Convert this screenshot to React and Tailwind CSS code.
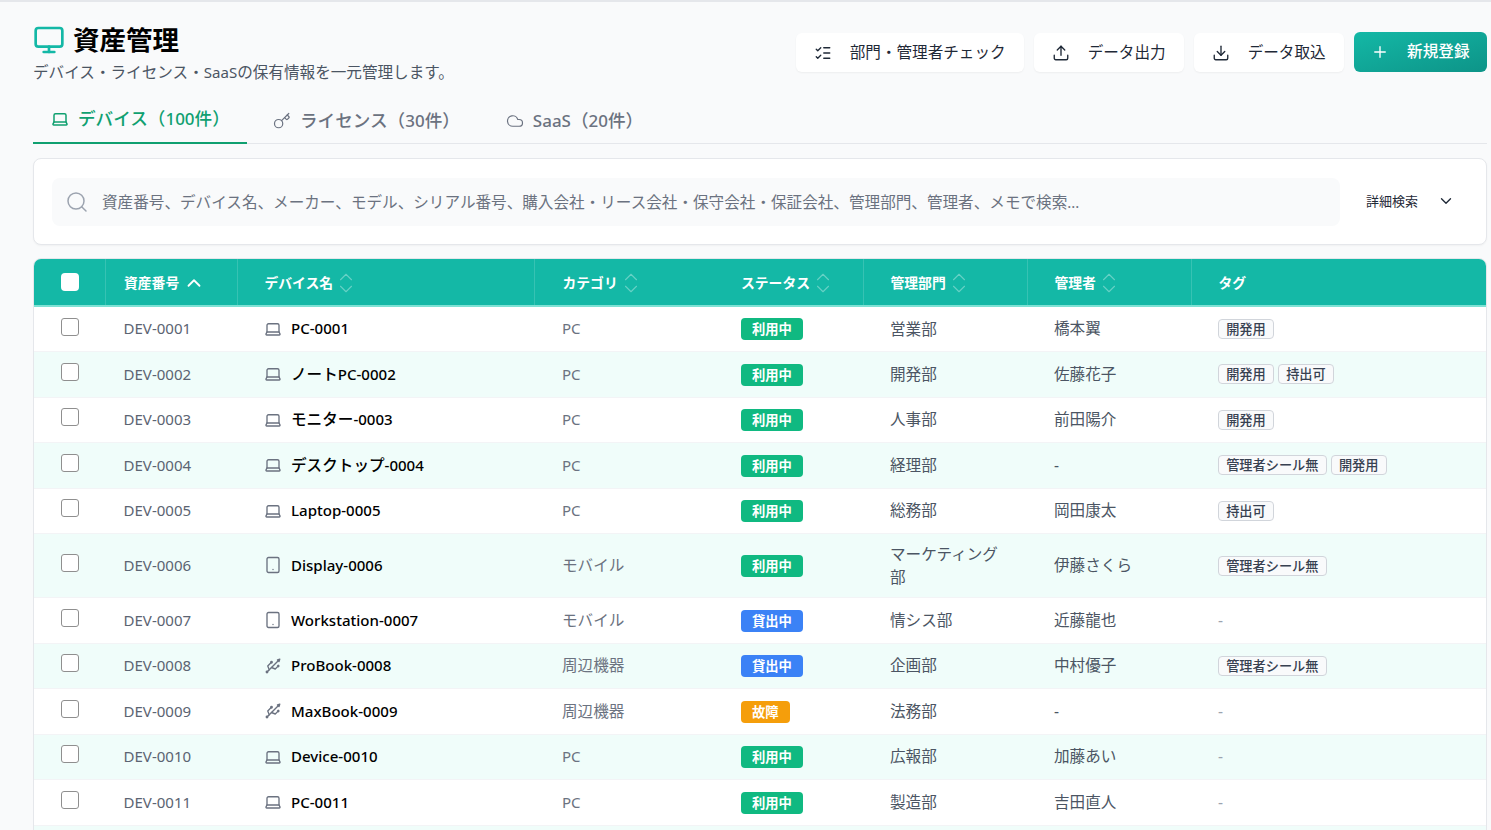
import React from "react";
import {
  Monitor, Laptop, Key, Cloud, Search, ChevronDown, ChevronUp,
  ListChecks, Upload, Download, Plus, Tablet, Usb,
} from "lucide-react";

const rows = [
  { id: "DEV-0001", name: "PC-0001", icon: "laptop", category: "PC", status: "利用中", dept: "営業部", owner: "橋本翼", tags: ["開発用"] },
  { id: "DEV-0002", name: "ノートPC-0002", icon: "laptop", category: "PC", status: "利用中", dept: "開発部", owner: "佐藤花子", tags: ["開発用", "持出可"] },
  { id: "DEV-0003", name: "モニター-0003", icon: "laptop", category: "PC", status: "利用中", dept: "人事部", owner: "前田陽介", tags: ["開発用"] },
  { id: "DEV-0004", name: "デスクトップ-0004", icon: "laptop", category: "PC", status: "利用中", dept: "経理部", owner: "-", tags: ["管理者シール無", "開発用"] },
  { id: "DEV-0005", name: "Laptop-0005", icon: "laptop", category: "PC", status: "利用中", dept: "総務部", owner: "岡田康太", tags: ["持出可"] },
  { id: "DEV-0006", name: "Display-0006", icon: "tablet", category: "モバイル", status: "利用中", dept: "マーケティング部", owner: "伊藤さくら", tags: ["管理者シール無"] },
  { id: "DEV-0007", name: "Workstation-0007", icon: "tablet", category: "モバイル", status: "貸出中", dept: "情シス部", owner: "近藤龍也", tags: [] },
  { id: "DEV-0008", name: "ProBook-0008", icon: "usb", category: "周辺機器", status: "貸出中", dept: "企画部", owner: "中村優子", tags: ["管理者シール無"] },
  { id: "DEV-0009", name: "MaxBook-0009", icon: "usb", category: "周辺機器", status: "故障", dept: "法務部", owner: "-", tags: [] },
  { id: "DEV-0010", name: "Device-0010", icon: "laptop", category: "PC", status: "利用中", dept: "広報部", owner: "加藤あい", tags: [] },
  { id: "DEV-0011", name: "PC-0011", icon: "laptop", category: "PC", status: "利用中", dept: "製造部", owner: "吉田直人", tags: [] },
];

const statusClass = {
  "利用中": "bg-[#10b981]",
  "貸出中": "bg-[#3b82f6]",
  "故障": "bg-[#f59e0b]",
};

const deviceIcons = { laptop: Laptop, tablet: Tablet, usb: Usb };

// Latin runs sit a little smaller than the kana and kanji around them
const Mixed = ({ text }) =>
  text.split(/([A-Za-z0-9.-]+)/).map((part, i) =>
    i % 2 === 1 ? <span key={i} className="text-[0.965em]">{part}</span> : part
  );

const SortIcon = () => (
  <span className="ml-[2px] flex flex-col text-white/35">
    <ChevronUp size={22} strokeWidth={1.2} className="-mb-[10.5px]" />
    <ChevronDown size={22} strokeWidth={1.2} />
  </span>
);

const HeaderCell = ({ children, sort = true, last = false, className = "pl-[27px]" }) => (
  <th className={`h-[47px] pt-[2px] text-left align-middle text-[13.8px] font-bold text-white ${className} ${last ? "" : "border-r border-white/15"}`}>
    <div className="flex items-center">
      {children}
      {sort && <SortIcon />}
    </div>
  </th>
);

const ActionButton = ({ icon: Icon, label }) => (
  <button className="flex h-[39px] items-center gap-[18px] rounded-md bg-white px-[18px] text-[15.6px] text-[#1f2937] shadow-[0_1px_2px_rgba(0,0,0,0.05)]">
    <Icon size={18} strokeWidth={1.8} />
    {label}
  </button>
);

const App = () => {
  return (
    <div
      className="h-[830px] w-[1491px] overflow-hidden border-t-2 border-[#e5e7eb] bg-[#f9fafb] pl-[33px] pr-[4px] text-[#4b5563]"
      style={{ fontFamily: '"Noto Sans", "Noto Sans CJK JP", sans-serif' }}
    >
      {/* Header */}
      <div className="flex items-start justify-between pt-[20px]">
        <div>
          <div className="flex items-center gap-[8px]">
            <Monitor size={32} strokeWidth={2} className="text-[#14b8a6]" />
            <h1 className="text-[26.5px] leading-[36px] font-bold text-black">資産管理</h1>
          </div>
          <p className="mt-[3px] text-[15.6px] leading-[22px] text-[#4b5563]"><Mixed text="デバイス・ライセンス・SaaSの保有情報を一元管理します。" /></p>
        </div>
        <div className="flex items-start gap-[10px] pt-[11px]">
          <ActionButton icon={ListChecks} label="部門・管理者チェック" />
          <ActionButton icon={Upload} label="データ出力" />
          <ActionButton icon={Download} label="データ取込" />
          <button className="-mt-[1px] flex h-[40px] items-center gap-[18px] rounded-md bg-gradient-to-br from-[#14b8a6] to-[#0d9488] px-[17.5px] text-[15.6px] font-medium text-white">
            <Plus size={18} strokeWidth={1.8} />
            新規登録
          </button>
        </div>
      </div>

      {/* Tabs */}
      <div className="mt-[14px] flex h-[47px] items-center border-b border-[#e5e7eb]">
        <div className="flex h-[47px] w-[214px] items-center gap-[9px] border-b-2 border-[#10a070] pb-[1px] pl-[18px] text-[17.6px] font-medium text-[#10a070]">
          <Laptop size={18} strokeWidth={2} />
          <span><Mixed text="デバイス（100件）" /></span>
        </div>
        <div className="flex h-[47px] items-center gap-[9px] pl-[26px] pt-[1px] text-[17.6px] font-medium text-[#6b7280]">
          <Key size={18} strokeWidth={1.6} />
          <span><Mixed text="ライセンス（30件）" /></span>
        </div>
        <div className="flex h-[47px] items-center gap-[9px] pl-[46px] pt-[1px] text-[17.6px] font-medium text-[#6b7280]">
          <Cloud size={18} strokeWidth={1.6} />
          <span><Mixed text="SaaS（20件）" /></span>
        </div>
      </div>

      {/* Search */}
      <div className="mt-[14px] flex h-[87px] items-center rounded-lg border border-[#e5e7eb] bg-white pl-[18px] pr-[31px] shadow-[0_1px_2px_rgba(0,0,0,0.04)]">
        <div className="flex h-[48px] w-[1288px] items-center gap-[13px] rounded-lg bg-[#f9fafb] pl-[13px]">
          <Search size={24} strokeWidth={1.5} className="text-[#9ca3af]" />
          <span className="pt-[2px] text-[15.6px] text-[#6b7280]"><Mixed text="資産番号、デバイス名、メーカー、モデル、シリアル番号、購入会社・リース会社・保守会社・保証会社、管理部門、管理者、メモで検索..." /></span>
        </div>
        <div className="ml-[26px] flex flex-1 items-center justify-between text-[13px] text-[#1f2937]">
          詳細検索
          <ChevronDown size={18} strokeWidth={1.8} className="-mt-[2px]" />
        </div>
      </div>

      {/* Table */}
      <div className="mt-[13px] overflow-hidden rounded-lg border border-[#e5e7eb] bg-white">
        <table className="w-full table-fixed border-collapse">
          <colgroup>
            <col className="w-[71px]" />
            <col className="w-[132px]" />
            <col className="w-[297px]" />
            <col className="w-[179px]" />
            <col className="w-[150px]" />
            <col className="w-[164px]" />
            <col className="w-[164px]" />
            <col />
          </colgroup>
          <thead>
            <tr className="border-b-2 border-[#7ee2d4] bg-[#14b8a6]">
              <th className="h-[47px] border-r border-white/15 pl-[2px] text-center align-middle">
                <span className="mx-auto block size-[18px] rounded-[4px] bg-white" />
              </th>
              <th className="h-[47px] border-r border-white/15 pl-[18.5px] pt-[2px] text-left align-middle text-[13.8px] font-bold text-white">
                <div className="flex items-center">
                  資産番号
                  <ChevronUp size={22} strokeWidth={2} className="ml-[4px]" />
                </div>
              </th>
              <HeaderCell>デバイス名</HeaderCell>
              <th className="h-[47px] pl-[28px] pt-[2px] text-left align-middle text-[13.8px] font-bold text-white">
                <div className="flex items-center">カテゴリ<SortIcon /></div>
              </th>
              <HeaderCell className="pl-[28px]">ステータス</HeaderCell>
              <HeaderCell>管理部門</HeaderCell>
              <HeaderCell>管理者</HeaderCell>
              <HeaderCell sort={false} last>タグ</HeaderCell>
            </tr>
          </thead>
          <tbody>
            {rows.map((row, i) => {
              const DeviceIcon = deviceIcons[row.icon];
              return (
                <tr key={row.id} className={`h-[45.5px] border-b border-[#f3f4f6] text-[15.6px] ${i % 2 === 1 ? "bg-[#f0fdfa]" : "bg-white"}`}>
                  <td className="text-center align-middle">
                    <span className="mx-auto -mt-[5px] block size-[18px] rounded-[3px] border-[1.5px] border-[#8f8f8f] bg-white" />
                  </td>
                  <td className="pl-[18.5px] align-middle text-[#5b6472]"><Mixed text={row.id} /></td>
                  <td className="pl-[27px] align-middle">
                    <div className="flex items-center gap-[9px] font-medium text-black">
                      <DeviceIcon size={18} strokeWidth={1.8} className="text-[#6b7280]" />
                      <span><Mixed text={row.name} /></span>
                    </div>
                  </td>
                  <td className="pl-[28px] align-middle text-[#6b7280]"><Mixed text={row.category} /></td>
                  <td className="pl-[28px] align-middle">
                    <span className={`inline-block rounded-[4px] px-[11px] text-[13.3px] leading-[22px] font-bold text-white ${statusClass[row.status]}`}>{row.status}</span>
                  </td>
                  <td className="px-[27px] py-[8.5px] align-middle leading-[23px] text-[#4b5563]">{row.dept}</td>
                  <td className="pl-[27px] align-middle text-[#4b5563]">{row.owner}</td>
                  <td className="pl-[27px] align-middle">
                    {row.tags.length ? (
                      <div className="flex gap-[4px]">
                        {row.tags.map((tag) => (
                          <span key={tag} className="rounded-[4px] border border-[#d1d5db] bg-[#f9fafb] px-[7.2px] text-[13.2px] leading-[18px] font-medium text-[#374151]">{tag}</span>
                        ))}
                      </div>
                    ) : (
                      <span className="text-[#9ca3af]">-</span>
                    )}
                  </td>
                </tr>
              );
            })}
            {/* next row starts right at the bottom edge of the window */}
            <tr className="h-[45.5px] bg-[#f0fdfa]">
              <td colSpan={8} />
            </tr>
          </tbody>
        </table>
      </div>
    </div>
  );
};

export default App;
